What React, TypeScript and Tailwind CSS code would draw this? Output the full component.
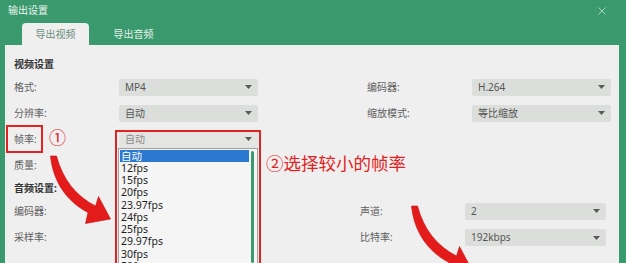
import React from 'react';

const fpsOptions = ['自动', '12fps', '15fps', '20fps', '23.97fps', '24fps', '25fps', '29.97fps', '30fps', '50fps'];

const Caret = () => (
  <svg width="7" height="4" viewBox="0 0 7 4" className="shrink-0">
    <path d="M0 0 L7 0 L3.5 4 Z" fill="#5a5a5a" />
  </svg>
);

const Select: React.FC<{ value?: string; width?: string; muted?: boolean; children?: React.ReactNode }> = ({
  value,
  width = 'w-[139px]',
  muted,
  children,
}) => (
  <div className={`relative ${width} h-[17px]`}>
    <div
      className={`h-full flex items-center justify-between pl-[6px] pr-[6px] rounded-[2px] ${
        muted ? 'bg-[#e4e5e3] text-[#8a8a8a]' : 'bg-[#dcdedb] text-[#555]'
      }`}
    >
      <span>{value}</span>
      <Caret />
    </div>
    {children}
  </div>
);

const Row: React.FC<{
  label: string;
  right?: string;
  rightValue?: string;
  gap?: string;
  rightWidth?: string;
  height?: string;
  children: React.ReactNode;
}> = ({ label, right, rightValue, gap = 'ml-[109px]', rightWidth = 'w-[139px]', height = 'h-[26px]', children }) => (
  <div className={`flex items-center ${height}`}>
    <div className="w-[105px] text-[#606060]">{label}</div>
    {children}
    {right && (
      <>
        <div className={`${gap} w-[105px] text-[#606060]`}>{right}</div>
        <Select value={rightValue} width={rightWidth} />
      </>
    )}
  </div>
);

// open list of the frame-rate select, it covers the selects below it
const FpsList = () => (
  <div className="absolute left-[-1px] top-full w-[140px] h-[120px] bg-[#f5f5f5] border border-[#a3a3a3] pt-[1px] pl-[1px] overflow-hidden z-10 text-[10.5px]">
    {fpsOptions.map((o, i) => (
      <div
        key={o}
        className={`w-[129px] h-[12.25px] leading-[12.25px] pl-[1px] ${
          i === 0 ? 'bg-[#2a78cf] text-white' : 'text-[#1e1e1e]'
        }`}
      >
        {o}
      </div>
    ))}
    <div className="absolute right-[3px] top-[2px] w-[3px] h-[112px] rounded-full bg-[#3b9a6d]" />
  </div>
);

const Arrow = () => (
  <path
    d="M50.5 156 C53 181 66 201 88 212.5 L85.5 223.5 L110.5 219 L98.5 196.5 L95.5 206 C76 196 63 180 56.5 156 Z"
    fill="#e31b1b"
    stroke="#c51010"
    strokeWidth="0.6"
  />
);

export default function App() {
  return (
    <div className="relative w-[626px] h-[263px] overflow-hidden bg-[#3b9a6d] font-['Noto_Sans','Noto_Sans_CJK_SC',sans-serif] text-[10px]">
      <div className="h-[21px] flex items-center justify-between pl-[8px] pr-[20px] text-white/90">
        <span>输出设置</span>
        <svg width="8" height="8" viewBox="0 0 8 8">
          <path d="M0.5 0.5 L7.5 7.5 M7.5 0.5 L0.5 7.5" stroke="rgba(255,255,255,0.55)" strokeWidth="1" />
        </svg>
      </div>

      <div className="h-[24px] flex items-end pl-[22px] gap-[11px]">
        <div className="w-[67px] h-[22px] rounded-t-[4px] bg-[#efefef] flex items-center justify-center text-[#6d8d7c]">
          导出视频
        </div>
        <div className="w-[67px] h-[22px] flex items-center justify-center text-[#e3f1ea]">导出音频</div>
      </div>

      <div className="ml-[5px] mr-[7px] h-[218px] bg-[#efefef] pt-[10px] pl-[9px]">
        <div className="h-[19px] flex items-center font-bold text-[#333]">视频设置</div>
        <Row label="格式:" right="编码器:" rightValue="H.264">
          <Select value="MP4" />
        </Row>
        <Row label="分辨率:" right="缩放模式:" rightValue="等比缩放">
          <Select value="自动" />
        </Row>
        <Row label="帧率:">
          <Select value="自动" muted>
            <FpsList />
          </Select>
        </Row>
        <Row label="质量:">
          <Select />
        </Row>
        <div className="h-[20px] flex items-center font-bold text-[#333]">音频设置:</div>
        <Row label="编码器:" right="声道:" rightValue="2" gap="ml-[102px]" rightWidth="w-[141px]">
          <Select />
        </Row>
        <Row label="采样率:" right="比特率:" rightValue="192kbps" gap="ml-[102px]" rightWidth="w-[141px]" height="h-[27px]">
          <Select />
        </Row>
      </div>

      {/* annotations */}
      <div className="absolute left-[6px] top-[125px] w-[37px] h-[28px] border-2 border-[#e02424]" />
      <div className="absolute left-[49px] top-[128px] text-[17px] leading-[20px] text-[#e02424]">①</div>
      <div className="absolute left-[115px] top-[130px] w-[146px] h-[150px] border-2 border-[#e02424] z-20" />
      <div className="absolute left-[266px] top-[152px] text-[17.5px] leading-[22px] text-[#e02424] font-['Noto_Sans_CJK_SC',sans-serif]">
        ②选择较小的帧率
      </div>
      <svg className="absolute inset-0 z-30 pointer-events-none" width="626" height="263" viewBox="0 0 626 263">
        <Arrow />
        <g transform="translate(361 50)">
          <Arrow />
        </g>
      </svg>
    </div>
  );
}
